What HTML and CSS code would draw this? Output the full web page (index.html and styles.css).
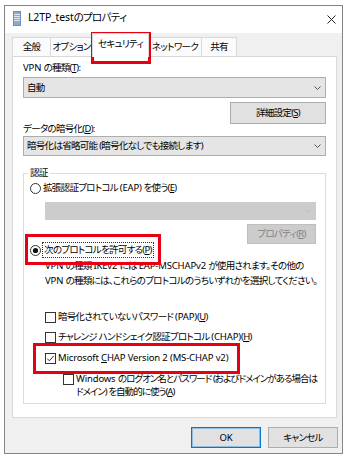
FILE: index.html
```html
<!DOCTYPE html>
<html lang="ja">
<head>
  <meta charset="UTF-8" />
  <title>L2TP_testのプロパティ</title>
  <link rel="stylesheet" href="styles.css">
</head>
<body>
  <div class="window">
    <div class="titlebar">
      <svg class="app-icon" width="8" height="15" viewBox="0 0 8 15">
        <rect x="0" y="0" width="8" height="15" fill="#6f8fb6"/>
        <rect x="1" y="1" width="6" height="13" fill="#8eaacb"/>
        <path d="M1 3.5h6M1 5.5h6M1 7.5h6M1 9.5h6" stroke="#dfe8f2" stroke-width="1"/>
      </svg>
      <span class="title"><span class="en">L2TP_test</span>のプロパティ</span>
      <svg class="close" width="9" height="9" viewBox="0 0 9 9">
        <path d="M0.5 0.5L8.5 8.5M8.5 0.5L0.5 8.5" stroke="#222" stroke-width="1"/>
      </svg>
    </div>

    <div class="client">
      <div class="tabs">
        <div class="tab t1">全般</div>
        <div class="tab t2">オプション</div>
        <div class="tab t3 active">セキュリティ</div>
        <div class="tab t4">ネットワーク</div>
        <div class="tab t5">共有</div>
      </div>

      <div class="panel">
        <div class="label l1"><span class="en">VPN </span>の種類(<u>T</u>):</div>
        <div class="combo c1">
          <span>自動</span>
          <svg class="chev" width="7" height="4" viewBox="0 0 7 4"><polyline points="0.5,0.5 3.5,3.5 6.5,0.5" fill="none" stroke="#555"/></svg>
        </div>
        <div class="btn btn-adv">詳細設定(<u>S</u>)</div>
        <div class="label l2">データの暗号化(<u>D</u>):</div>
        <div class="combo c2">
          <span>暗号化は省略可能 (暗号化なしでも接続します)</span>
          <svg class="chev" width="7" height="4" viewBox="0 0 7 4"><polyline points="0.5,0.5 3.5,3.5 6.5,0.5" fill="none" stroke="#555"/></svg>
        </div>

        <fieldset class="group">
          <legend>認証</legend>
          <div class="option r1">
            <svg class="radio" width="11" height="11" viewBox="0 0 11 11"><circle cx="5.5" cy="5.5" r="5" fill="#fff" stroke="#333"/></svg>
            <span>拡張認証プロトコル <span class="en">(EAP)</span> を使う(<u>E</u>)</span>
          </div>
          <div class="combo c3 disabled">
            <svg class="chev" width="7" height="4" viewBox="0 0 7 4"><polyline points="0.5,0.5 3.5,3.5 6.5,0.5" fill="none" stroke="#bcbcbc"/></svg>
          </div>
          <div class="btn btn-prop disabled">プロパティ(<u>R</u>)</div>
          <div class="option r2">
            <svg class="radio" width="11" height="11" viewBox="0 0 11 11"><circle cx="5.5" cy="5.5" r="5" fill="#fff" stroke="#333"/><circle cx="5.5" cy="5.5" r="2.6" fill="#111"/></svg>
            <span class="focus">次のプロトコルを許可する(<u>P</u>)</span>
          </div>
          <p class="note"><span class="en">VPN </span>の種類 <span class="en">IKEv2 </span>には <span class="en">EAP-MSCHAPv2 </span>が使用されます。その他の<br><span class="en">VPN </span>の種類には、これらのプロトコルのうちいずれかを選択してください。</p>
          <div class="option cb cb1">
            <svg class="check" width="11" height="11" viewBox="0 0 11 11"><rect x="0.5" y="0.5" width="10" height="10" fill="#fff" stroke="#333"/></svg>
            <span>暗号化されていないパスワード <span class="en">(PAP)</span>(<u>U</u>)</span>
          </div>
          <div class="option cb cb2">
            <svg class="check" width="11" height="11" viewBox="0 0 11 11"><rect x="0.5" y="0.5" width="10" height="10" fill="#fff" stroke="#333"/></svg>
            <span>チャレンジ ハンドシェイク認証プロトコル <span class="en">(CHAP)</span>(<u>H</u>)</span>
          </div>
          <div class="option cb cb3">
            <svg class="check" width="11" height="11" viewBox="0 0 11 11"><rect x="0.5" y="0.5" width="10" height="10" fill="#fff" stroke="#333"/><path d="M2.2 5.6L4.4 7.8L8.8 2.8" fill="none" stroke="#333"/></svg>
            <span class="en">Microsoft <u>C</u>HAP Version 2 (MS-CHAP v2)</span>
          </div>
          <div class="option cb cb4">
            <svg class="check" width="11" height="11" viewBox="0 0 11 11"><rect x="0.5" y="0.5" width="10" height="10" fill="#fff" stroke="#333"/></svg>
            <span class="tight"><span class="en">Windows </span>のログオン名とパスワード (およびドメインがある場合は<br>ドメイン) を自動的に使う(<u>A</u>)</span>
          </div>
        </fieldset>
      </div>

      <div class="actions">
        <div class="btn btn-ok en">OK</div>
        <div class="btn btn-cancel">キャンセル</div>
      </div>
    </div>
  </div>

  <!-- annotation frames -->
  <div class="mark m1"></div>
  <div class="mark m2"></div>
  <div class="mark m3"></div>
</body>
</html>
```

FILE: styles.css
```css
* {
  box-sizing: border-box;
}

body {
  margin: 0;
  background: #fff;
  font-family: "Noto Sans", "Noto Sans CJK JP", sans-serif;
  font-size: 9.5px;
  letter-spacing: -0.7px;
  color: #000;
  font-feature-settings: "palt";
  white-space: nowrap;
}

/* latin runs are not squeezed as much as the kana */
.en {
  letter-spacing: -0.15px;
}

.tight {
  letter-spacing: -0.95px;
}

u {
  text-decoration-thickness: 1px;
  text-underline-offset: 1px;
}

.window {
  margin: 5px 0 0 4px;
  width: 339px;
  height: 449px;
  border: 1px solid #858585;
  background: #f0f0f0;
  display: flex;
  flex-direction: column;
}

.titlebar {
  height: 27px;
  background: #fff;
  display: flex;
  align-items: flex-start;
  padding: 5px 0 0 8px;
}

.app-icon {
  flex: none;
}

.title {
  margin-left: 7px;
  margin-top: -1px;
  line-height: 14px;
  font-size: 10.5px;
}

.close {
  margin-left: auto;
  margin-right: 6px;
  margin-top: 4px;
}

.client {
  flex: 1;
  padding: 0 4px 0 7px;
  display: flex;
  flex-direction: column;
}

/* tab strip */
.tabs {
  height: 23px;
  display: flex;
  align-items: flex-end;
}

.tab {
  height: 19px;
  border: 1px solid #d9d9d9;
  border-bottom: none;
  background: #fbfbfb;
  margin-left: -1px;
  display: flex;
  align-items: center;
  justify-content: center;
  line-height: 14px;
}

.t1 { width: 39px; margin-left: 0; }
.t2 { width: 43px; }
.t3 { width: 57px; }
.t4 { width: 54px; }
.t5 { width: 36px; }

.tab.active {
  height: 24px;
  margin-bottom: -1px;
  background: #fff;
  position: relative;
  z-index: 1;
  padding-bottom: 3px;
}

.panel {
  width: 325px;
  height: 362px;
  border: 1px solid #d9d9d9;
  background: #fff;
  padding: 0 10px;
  display: flex;
  flex-direction: column;
}

.label {
  line-height: 14px;
}

.l1 { margin-top: 4px; }
.l2 { margin-top: -2px; }

.combo {
  height: 21px;
  border: 1px solid #adadad;
  background: #e5e5e5;
  display: flex;
  align-items: center;
  padding: 0 4px 0 3px;
  line-height: 14px;
}

.combo .chev {
  margin-left: auto;
}

.c1 { margin-top: 2px; }
.c2 { height: 20px; }

.combo.disabled {
  background: #cccccc;
  border-color: #cccccc;
  height: 18px;
  margin: 7px 0 0 15px;
}

.btn {
  height: 22px;
  border: 1px solid #adadad;
  background: #e1e1e1;
  display: flex;
  align-items: center;
  justify-content: center;
  line-height: 14px;
}

.btn-adv {
  width: 96px;
  margin-top: 4px;
  align-self: flex-end;
}

.btn.disabled {
  color: #838383;
  background: #cccccc;
  border-color: #bfbfbf;
}

.btn-prop {
  width: 69px;
  height: 20px;
  margin-top: 4px;
  align-self: flex-end;
}

/* authentication group */
.group {
  margin: 10px 0 0;
  padding: 0 9px 5px 6px;
  border: 1px solid #dcdcdc;
  min-width: 0;
  display: flex;
  flex-direction: column;
}

.group legend {
  padding: 0 2px;
  margin-left: -2px;
  line-height: 14px;
}

.option {
  display: flex;
  align-items: center;
  line-height: 14px;
}

.radio {
  flex: none;
  margin-right: 2px;
}

.r1 { margin-top: 1px; }
.r2 { margin-top: -1px; }

.focus {
  outline: 1px dotted #333;
  outline-offset: 0;
  padding: 0 1px;
}

.note {
  margin: 1px 0 0 15px;
  line-height: 15px;
}

.cb {
  margin-left: 15px;
}

.check {
  flex: none;
  margin-right: 2px;
}

.cb1 { margin-top: 22px; }
.cb2 { margin-top: 6px; }
.cb3 { margin-top: 7px; }

.cb4 {
  margin: 7px 0 0 33px;
  align-items: flex-start;
  line-height: 13px;
}

.cb4 .check {
  margin-top: 2px;
}

/* dialog buttons */
.actions {
  margin-top: 9px;
  display: flex;
  justify-content: flex-end;
  gap: 7px;
}

.actions .btn {
  width: 70px;
  height: 21px;
}

.btn-ok {
  border-color: #0078d7;
  box-shadow: inset 0 0 0 1px rgba(0, 120, 215, 0.35);
}

/* red highlight frames drawn over the screenshot */
.mark {
  position: absolute;
  border: 3px solid #e60012;
}

.m1 { left: 91px; top: 32px; width: 60px; height: 32px; }
.m2 { left: 25px; top: 234px; width: 136px; height: 31px; }
.m3 { left: 33px; top: 343px; width: 207px; height: 31px; }
```
